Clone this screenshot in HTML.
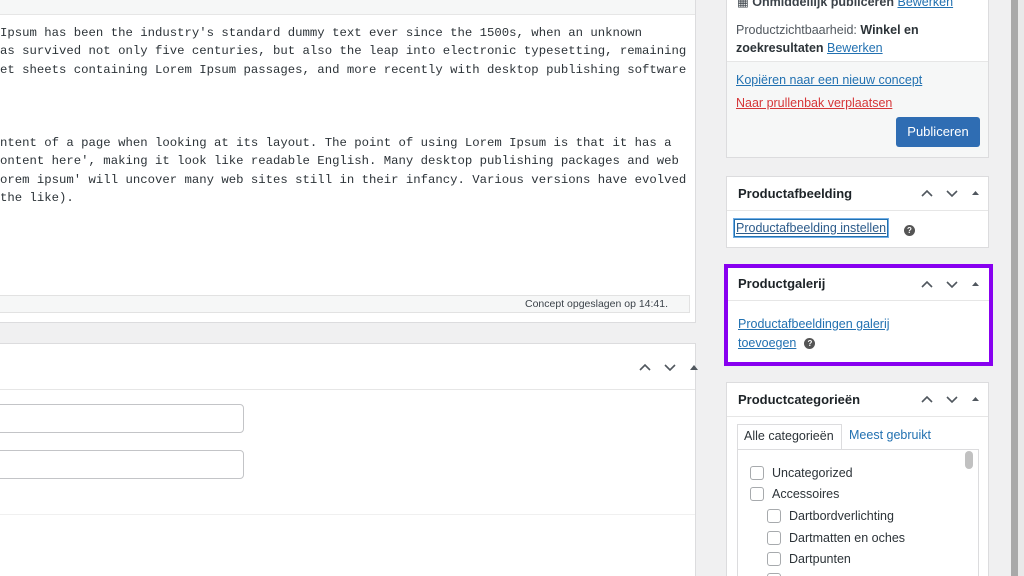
<!DOCTYPE html>
<html style="width:1024px;height:576px;overflow:hidden"><head><meta charset="utf-8"><style>
*{box-sizing:border-box;margin:0;padding:0}
body{width:1024px;height:576px;overflow:hidden;background:#f0f0f1;font-family:"Liberation Sans",sans-serif;position:relative;color:#1d2327}
.abs{position:absolute}
.mono{font-family:"Liberation Mono",monospace;font-size:12.3px;color:#2c3338;white-space:pre;line-height:18.3px}
.box{position:absolute;background:#fff;border:1px solid #dcdcde;overflow:hidden}
.hd{position:absolute;left:0;right:0;top:0;border-bottom:1px solid #e6e6e6;font-weight:bold;font-size:13px;padding-left:11px}
a{color:#2271b1;text-decoration:underline}
.q{display:inline-block;width:11px;height:11px;border-radius:50%;background:#555;color:#fff;font-size:8px;font-weight:bold;text-align:center;line-height:11px;vertical-align:middle;margin-left:8px}
.cb{position:absolute;width:14px;height:14px;border:1px solid #a7aaad;border-radius:3px;background:#fff}
.ct{position:absolute;font-size:12.5px;color:#2c3338}
svg.ar{position:absolute}
</style></head><body>
<!-- left editor -->
<div class="abs" style="left:0;top:0;width:696px;height:323px;background:#fff;border-right:1px solid #dcdcde;border-bottom:1px solid #dcdcde"></div>
<div class="abs" style="left:0;top:0;width:695px;height:15px;background:#f6f7f7;border-bottom:1px solid #e6e6e6"></div>
<div class="abs mono" style="left:0;top:24px">Ipsum has been the industry's standard dummy text ever since the 1500s, when an unknown
as survived not only five centuries, but also the leap into electronic typesetting, remaining
et sheets containing Lorem Ipsum passages, and more recently with desktop publishing software</div>
<div class="abs mono" style="left:0;top:134px">ntent of a page when looking at its layout. The point of using Lorem Ipsum is that it has a
ontent here', making it look like readable English. Many desktop publishing packages and web
orem ipsum' will uncover many web sites still in their infancy. Various versions have evolved
the like).</div>
<div class="abs" style="left:0;top:295px;width:690px;height:18px;background:#f6f7f7;border-top:1px solid #e2e2e2;border-bottom:1px solid #e2e2e2;border-right:1px solid #e2e2e2"></div>
<div class="abs" style="left:525px;top:298px;font-size:10.5px;color:#3c434a">Concept opgeslagen op 14:41.</div>
<!-- lower left panel -->
<div class="abs" style="left:0;top:343px;width:696px;height:233px;background:#fff;border-right:1px solid #dcdcde;border-top:1px solid #dcdcde"></div>
<div class="abs" style="left:0;top:389px;width:695px;height:1px;background:#e6e6e6"></div>
<div class="abs" style="left:0;top:514px;width:695px;height:1px;background:#f0f0f0"></div>
<svg class="ar" style="left:638px;top:361px" width="60" height="12"><path d="M2 9 L7 4 L12 9 M27 4 L32 9 L37 4" fill="none" stroke="#50575e" stroke-width="1.6"/><path d="M52 9 L56 4 L60 9Z" fill="#50575e"/></svg>
<div class="abs" style="left:-4px;top:404px;width:248px;height:29px;border:1px solid #c3c4c7;border-radius:4px;background:#fff"></div>
<div class="abs" style="left:-4px;top:450px;width:248px;height:29px;border:1px solid #c3c4c7;border-radius:4px;background:#fff"></div>
<!-- scrollbar strip -->
<div class="abs" style="left:1011px;top:0;width:7px;height:576px;background:#a9a9a9"></div>
<div class="abs" style="left:1018px;top:0;width:6px;height:576px;background:#e9e9e9"></div>
<!-- publish box -->
<div class="box" style="left:726px;top:-10px;width:263px;height:168px"></div>
<div class="abs" style="left:727px;top:61px;width:261px;height:96px;background:#f6f7f7;border-top:1px solid #e6e6e6"></div>
<div class="abs" style="left:737px;top:-6px;font-size:12.5px;color:#3c434a">▦ <b>Onmiddellijk publiceren</b> <a>Bewerken</a></div>
<div class="abs" style="left:736px;top:21px;font-size:12.5px;line-height:18px;color:#50575e;width:240px">Productzichtbaarheid: <b style="color:#2c3338">Winkel en zoekresultaten</b> <a>Bewerken</a></div>
<div class="abs" style="left:736px;top:73px;font-size:12.5px"><a>Kopiëren naar een nieuw concept</a></div>
<div class="abs" style="left:736px;top:96px;font-size:12.5px"><a style="color:#d63638">Naar prullenbak verplaatsen</a></div>
<div class="abs" style="left:896px;top:117px;width:84px;height:30px;background:#2f6db3;border-radius:3px;color:#fff;font-size:13px;text-align:center;line-height:30px">Publiceren</div>
<!-- productafbeelding -->
<div class="box" style="left:726px;top:176px;width:263px;height:72px"><div class="hd" style="height:34px;line-height:33px">Productafbeelding</div></div>
<svg class="ar" style="left:920px;top:187px" width="62" height="12"><path d="M2 9 L7 4 L12 9 M27 4 L32 9 L37 4" fill="none" stroke="#50575e" stroke-width="1.6"/><path d="M52 8 L55.5 4 L59 8Z" fill="#50575e"/></svg>
<div class="abs" style="left:734px;top:219px;border:1px solid #2271b1;padding:1px 1px;font-size:12.5px;box-shadow:0 0 0 1px #72aee6"><a style="color:#2c5b8a">Productafbeelding instellen</a></div>
<div class="abs" style="left:896px;top:222px"><span class="q">?</span></div>
<!-- productgalerij -->
<div class="abs" style="left:724px;top:264px;width:269px;height:102px;border:4px solid #8800f0;background:#fff"></div>
<div class="abs" style="left:728px;top:300px;width:261px;height:1px;background:#e6e6e6"></div>
<div class="abs" style="left:738px;top:276px;font-size:13px;font-weight:bold">Productgalerij</div>
<svg class="ar" style="left:920px;top:278px" width="62" height="12"><path d="M2 9 L7 4 L12 9 M27 4 L32 9 L37 4" fill="none" stroke="#50575e" stroke-width="1.6"/><path d="M52 8 L55.5 4 L59 8Z" fill="#50575e"/></svg>
<div class="abs" style="left:738px;top:315px;font-size:12.5px;line-height:19px;width:200px"><a>Productafbeeldingen galerij toevoegen</a><span class="q">?</span></div>
<!-- categories -->
<div class="box" style="left:726px;top:382px;width:263px;height:210px"><div class="hd" style="height:34px;line-height:33px">Productcategorieën</div></div>
<svg class="ar" style="left:920px;top:393px" width="62" height="12"><path d="M2 9 L7 4 L12 9 M27 4 L32 9 L37 4" fill="none" stroke="#50575e" stroke-width="1.6"/><path d="M52 8 L55.5 4 L59 8Z" fill="#50575e"/></svg>
<div class="abs" style="left:737px;top:424px;width:105px;height:26px;border:1px solid #dcdcde;border-bottom:none;background:#fff;font-size:12.5px;padding:4px 0 0 6px;color:#2c3338">Alle categorieën</div>
<div class="abs" style="left:849px;top:428px;font-size:12.5px;color:#2271b1">Meest gebruikt</div>
<div class="abs" style="left:737px;top:449px;width:242px;height:140px;border:1px solid #dcdcde;background:#fff"></div>
<div class="abs" style="left:965px;top:451px;width:8px;height:18px;border-radius:4px;background:#c1c1c1"></div>
<div class="cb" style="left:750px;top:466px"></div><div class="ct" style="left:772px;top:466px">Uncategorized</div>
<div class="cb" style="left:750px;top:487px"></div><div class="ct" style="left:772px;top:487px">Accessoires</div>
<div class="cb" style="left:767px;top:509px"></div><div class="ct" style="left:789px;top:509px">Dartbordverlichting</div>
<div class="cb" style="left:767px;top:531px"></div><div class="ct" style="left:789px;top:531px">Dartmatten en oches</div>
<div class="cb" style="left:767px;top:552px"></div><div class="ct" style="left:789px;top:552px">Dartpunten</div>
<div class="cb" style="left:767px;top:573px"></div>
</body></html>
